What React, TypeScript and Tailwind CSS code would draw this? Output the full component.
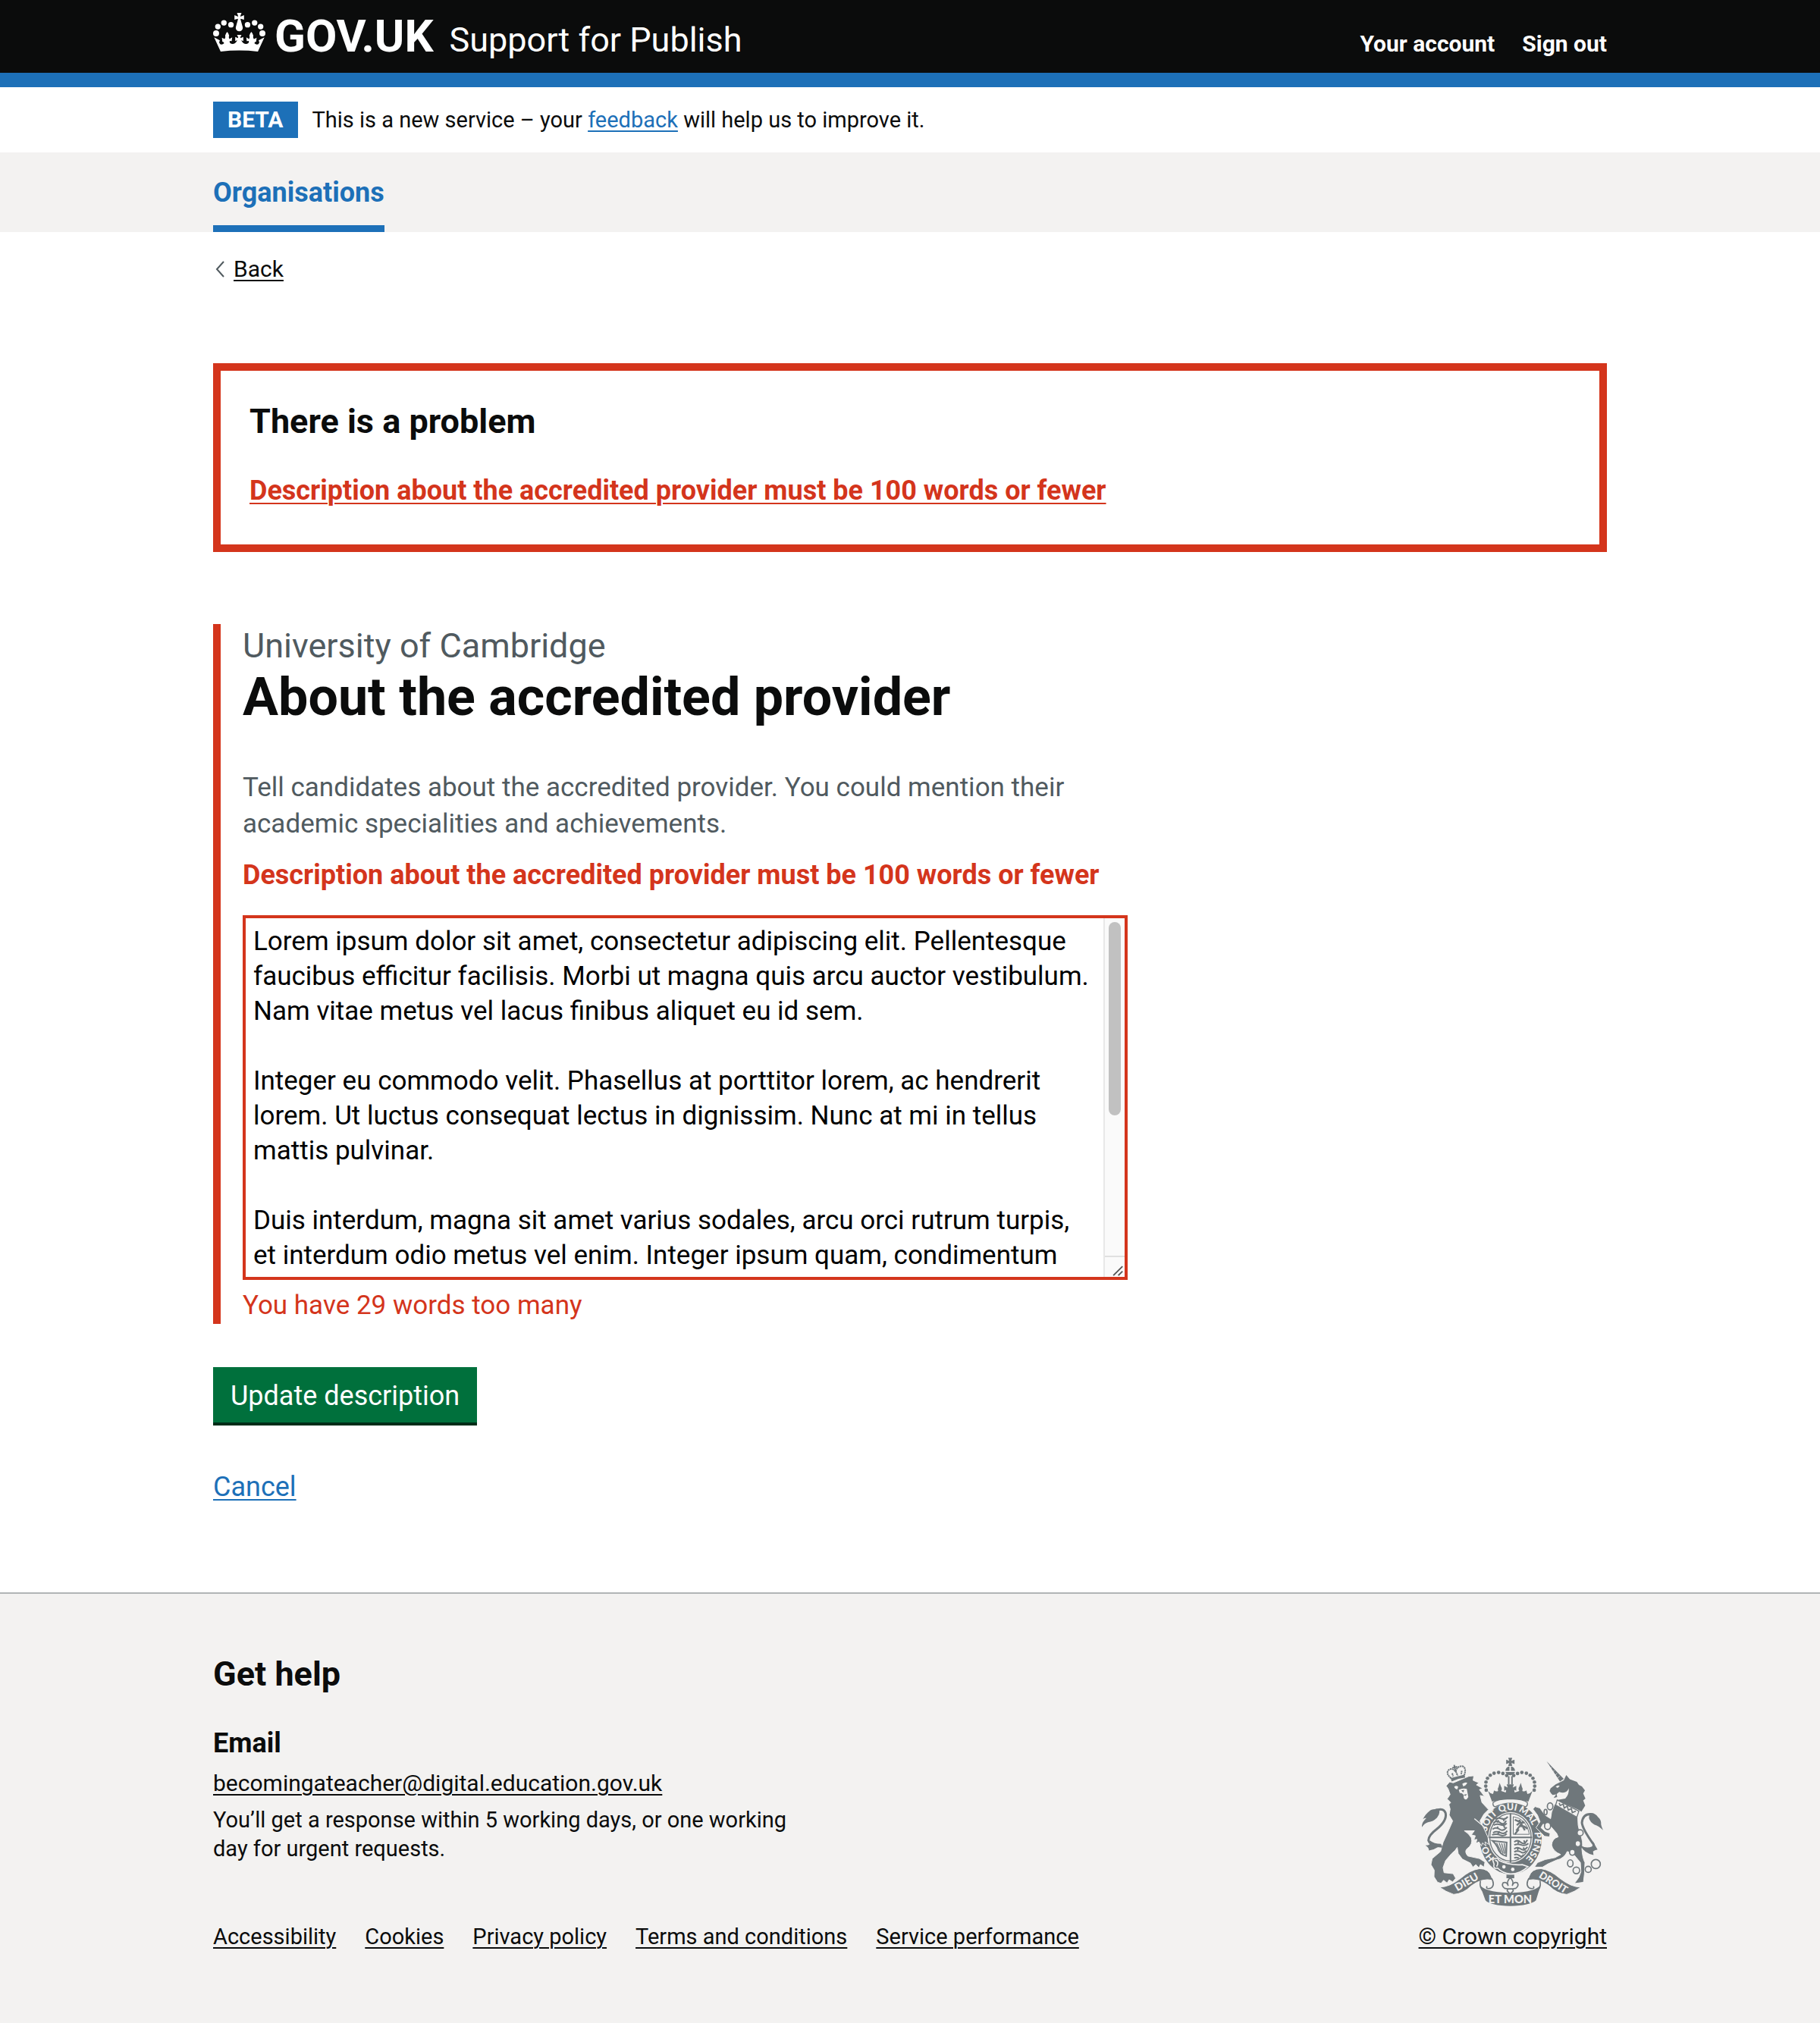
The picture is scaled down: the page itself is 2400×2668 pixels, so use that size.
import { useState, type ReactNode } from "react";

const ABOUT_TEXT = `Lorem ipsum dolor sit amet, consectetur adipiscing elit. Pellentesque faucibus efficitur facilisis. Morbi ut magna quis arcu auctor vestibulum. Nam vitae metus vel lacus finibus aliquet eu id sem.

Integer eu commodo velit. Phasellus at porttitor lorem, ac hendrerit lorem. Ut luctus consequat lectus in dignissim. Nunc at mi in tellus mattis pulvinar.

Duis interdum, magna sit amet varius sodales, arcu orci rutrum turpis, et interdum odio metus vel enim. Integer ipsum quam, condimentum vestibulum mauris vel, varius vehicula nunc. Sed tempor justo ut nibh gravida, vitae cursus arcu ornare. Vestibulum ante ipsum primis in faucibus orci luctus et ultrices posuere cubilia curae.

Praesent vitae nulla sed mi iaculis blandit. Aliquam erat volutpat. Donec eget sapien non risus rhoncus tincidunt at in est. Vivamus sed leo vitae.`;

const FOOTER_LINKS = [
  "Accessibility",
  "Cookies",
  "Privacy policy",
  "Terms and conditions",
  "Service performance",
];

function Container({ children, className = "" }: { children: ReactNode; className?: string }) {
  return <div className={`mx-auto w-full max-w-[1838px] ${className}`}>{children}</div>;
}

function Crown() {
  return (
    <svg viewBox="32 30 208 153" className="-mb-[5px] h-[51px] w-[69px] shrink-0" fill="currentColor" aria-hidden="true">
      <circle cx="75" cy="69" r="11" />
      <circle cx="51" cy="84" r="11" />
      <circle cx="44" cy="111" r="12" />
      <circle cx="103" cy="77" r="11" />
      <circle cx="197" cy="69" r="11" />
      <circle cx="221" cy="84" r="11" />
      <circle cx="228" cy="111" r="12" />
      <circle cx="169" cy="77" r="11" />
      <path d="M127 30H145L140 43Q141 44 142 44L155 39V57L142 53L141 55L148 80Q150 86 150 89A14 14 0 0 1 122 89Q122 86 124 80L131 55L130 53L117 57V39L130 44L132 43Z" />
      <path d="M36 127L62 183Q136 175 210 183L236 127L213 139L216 147L212 154Q204 158 196 150Q200 142 203 145L205 128Q197 132 194 134Q189 126 192 120Q189 110 184 105Q179 110 176 120Q180 126 175 134L164 127L166 142L174 141Q176 152 164 153Q150 153 144 138L152 142V125L141 130Q139 126 145 117H127Q133 126 131 130L120 125V142L128 138Q122 153 108 153Q96 152 98 141L106 142L108 127L97 134Q92 126 96 120Q93 110 88 105Q83 110 80 120Q83 126 78 134L67 128L69 145Q72 142 76 150Q68 158 60 154L56 147L59 139Z" />
    </svg>
  );
}

function RoyalArms() {
  const ink = "#6f777b";
  const paper = "#f3f2f1";
  const beads = [
    [327, 213],
    [325, 197],
    [326, 181],
    [332, 166],
    [343, 154],
    [358, 146],
    [376, 143],
    [393, 147],
    [408, 155],
  ];
  return (
    <svg viewBox="72 85 718 587" className="h-[196px] w-[239px]" fill={ink} fontFamily="Lato, sans-serif" fontWeight="900" role="img" aria-label="Royal coat of arms">
      <defs>
        <path id="garter" d="M423 508A96 108 0 0 1 423 292A96 108 0 0 1 423 508" />
      </defs>

      {/* Imperial crown */}
      <path d="M414 85H430L426 97L439 92V110L427 105L430 117H414L418 105L406 110V92L418 97Z" />
      <path d="M403 137A19 19 0 0 1 419 119V137ZM425 119A19 19 0 0 1 441 137H425ZM403 141H441Q438 151 422 154Q406 151 403 141Z" />
      {beads.map(([x, y]) => (
        <g key={`${x}-${y}`}>
          <circle cx={x} cy={y} r="7" />
          <circle cx={844 - x} cy={y} r="7" />
        </g>
      ))}
      <path d="M413 158H419V190H413ZM426 158H432V190H426Z" />
      <path d="M334 216L350 258Q422 238 494 258L510 216Q502 226 490 228L486 214Q478 220 470 216Q474 208 468 200L464 184L458 200Q452 208 458 216L440 222Q436 214 440 212L446 216V196L432 203L436 190H408L412 203L398 196V216L404 212Q408 214 404 222L386 216Q392 208 386 200L380 184L376 200Q370 208 374 216Q366 220 358 214L354 228Q342 226 334 216Z" />

      {/* Garter and shield */}
      <ellipse cx="424" cy="405" rx="123" ry="141" />
      <path d="M354 262Q370 248 422 247Q474 248 490 262Q492 276 482 279Q422 250 362 279Q352 276 354 262Z" fill={paper} stroke={ink} strokeWidth="4" />
      <ellipse cx="423" cy="400" rx="88" ry="100" fill={paper} />
      <g fill="none" stroke={ink}>
        <ellipse cx="423" cy="400" rx="82" ry="94" strokeWidth="4" />
        <path d="M423 305V500M337 400H509" strokeWidth="6" />
        <path d="M356 343Q368 330 382 342T406 334M356 352Q368 344 384 350T408 344M362 328Q374 320 388 326T412 318M352 368Q366 358 380 368T408 360M354 382Q368 374 384 382T410 374M350 390Q368 384 382 391T408 386M376 332L370 342M394 326L398 336M374 358L368 366M396 352L400 362M380 376L372 388" strokeWidth="6" />
        <path d="M438 418Q450 408 464 420T490 410M438 430Q452 424 466 430T494 424M438 446Q450 436 464 446T490 438M438 458Q452 450 464 458T486 452M438 470Q446 464 458 472T474 468M438 482Q444 478 456 482M458 412L452 424M476 412L482 426M456 440L450 450M474 440L480 452" strokeWidth="6" />
        <path d="M440 330L462 340L480 372M448 352Q462 336 478 342M446 374L462 352L474 336M462 356Q476 352 490 366M458 330L464 344M440 388L456 368" strokeWidth="7" />
        <path d="M434 318Q488 326 498 388H434Z" strokeWidth="3" />
        <path d="M352 414L408 420L406 474Q380 468 372 440Q366 426 352 414Z" strokeWidth="6" />
        <path d="M368 422L386 458M378 422L394 464M388 424L400 466M398 424L404 462" strokeWidth="4" />
      </g>
      <g fill={paper} fontSize="37" textAnchor="middle">
        <text>
          <textPath href="#garter" startOffset="98">HO</textPath>
        </text>
        <text>
          <textPath href="#garter" startOffset="224">SOIT</textPath>
        </text>
        <text>
          <textPath href="#garter" startOffset="310">QUI</textPath>
        </text>
        <text>
          <textPath href="#garter" startOffset="392">MAL</textPath>
        </text>
        <text>
          <textPath href="#garter" startOffset="518">PENSE</textPath>
        </text>
      </g>
      <path d="M352 488Q372 476 378 492Q420 512 470 508L492 516Q460 546 422 545Q392 542 372 522Q352 526 358 506Z" stroke={paper} strokeWidth="5" />
      <circle cx="397" cy="517" r="7" fill={paper} />
      <circle cx="432" cy="527" r="7" fill={paper} />
      <path d="M362 490Q380 496 368 516" fill="none" stroke={paper} strokeWidth="5" />

      {/* Lion */}
      <path
        d="M168 196L182 180L196 184L258 158L278 156L275 174L298 184L288 192L313 206L300 211L320 238L303 234L310 262L336 290L318 308L302 335L318 365L334 400L337 428L322 418L326 434L312 422L308 434L298 418L286 424L290 408L278 410L284 394L268 390L280 374L240 374Q258 384 268 402Q276 428 250 446Q240 458 254 474L300 484L322 498L318 518L304 508L298 521L286 508L274 518L264 502L232 486L216 464L212 440Q206 452 190 464L166 492L156 520L160 540L196 544L206 562L194 577L180 568L172 581L158 570L148 582L134 578L120 556L121 530L108 508L113 484L146 456L156 420L178 372L194 335L180 312L184 288L179 270L186 262L172 248L184 230L176 208Z"
        stroke={paper}
        strokeWidth="3"
      />
      <path d="M200 200Q208 192 216 200L212 210Q204 210 200 200ZM232 188Q244 180 252 184Q246 196 236 198ZM218 212Q232 204 250 208L256 240Q246 258 238 244Q240 224 222 224Z" fill={paper} />
      <path d="M228 214L240 212L236 222ZM236 232L250 228L246 236Z" />
      <path d="M280 326L326 364" stroke={paper} strokeWidth="4" />
      <path d="M186 165L240 152L244 163Q216 166 190 179Z" />
      <g fill="none" stroke={ink} strokeWidth="6">
        <path d="M188 166Q162 144 182 130Q196 126 206 140Q210 118 232 118Q250 124 240 154M206 138L214 156M192 146L196 158M230 136L228 150" strokeDasharray="7 2" />
        <path d="M200 113L204 133M192 125L212 120" />
      </g>
      <path d="M152 436Q106 436 98 412Q98 392 130 368Q172 334 166 304Q158 282 132 292" fill="none" stroke={ink} strokeWidth="9" />
      <path d="M140 288Q146 306 132 322Q116 338 96 340Q82 344 72 360Q70 342 90 324Q84 322 76 328Q88 306 102 296Q108 288 124 288Q130 284 140 288Z" />
      <path d="M104 412Q112 432 86 432Q100 440 100 452Q122 448 140 436L152 440L148 426Q120 426 104 412Z" />

      {/* Unicorn */}
      <path d="M566 98L634 168L619 179Z" />
      <path d="M576 112L570 116M586 122L580 130M597 134L590 142M608 146L600 154M618 157L609 166" stroke={paper} strokeWidth="2" />
      <path d="M578 216L582 206L602 190L634 174L644 153L658 170L686 180L694 192L706 198L718 214L711 226L720 246L711 254L719 274L704 298L690 290L606 252L640 246Q656 230 654 206Q644 230 616 220L606 228L608 240L594 244L604 230L590 232L584 226Z" />
      <path d="M602 200Q610 192 618 196L610 204Z" fill={paper} />
      <path
        d="M598 268L690 322Q688 350 698 382Q714 420 706 446Q708 480 718 500L716 545L712 578L676 583L694 558L702 536L700 500L672 466L648 456Q636 484 606 490L572 505L550 518L518 518L530 500L560 488L600 480L622 468Q590 455 586 430Q588 405 612 398L606 384L582 356L552 348L544 362L560 376L580 384L578 398L558 396L542 380L524 362L540 338L530 312L512 288L520 278L540 284L560 312L582 326L586 300Z"
        stroke={paper}
        strokeWidth="3"
      />
      <path d="M608 252L694 296L686 320L602 272Z" fill={paper} stroke={ink} strokeWidth="4" />
      <path d="M616 264L620 274L632 268L636 284L648 276L652 292L664 286L668 302L682 296" fill="none" stroke={ink} strokeWidth="5" />
      <g fill={paper} stroke={ink} strokeWidth="5">
        <ellipse cx="580" cy="277" rx="11" ry="14" />
        <ellipse cx="570" cy="355" rx="12" ry="14" />
        <ellipse cx="562" cy="300" rx="6" ry="11" />
        <circle cx="699" cy="382" r="12" />
        <ellipse cx="690" cy="425" rx="11" ry="12" />
        <ellipse cx="668" cy="459" rx="11" ry="12" />
        <ellipse cx="660" cy="503" rx="11" ry="14" />
        <circle cx="684" cy="531" r="13" />
        <circle cx="731" cy="527" r="12" />
        <circle cx="761" cy="506" r="18" />
      </g>
      <path d="M734 452Q758 450 752 428Q708 366 706 342Q710 306 742 308" fill="none" stroke={ink} strokeWidth="9" />
      <path d="M736 304Q756 300 770 320Q782 330 782 344Q780 348 790 372Q772 354 756 350Q738 340 734 324Z" />
      <path d="M700 432Q724 446 746 436Q752 428 750 416Q760 436 768 448Q756 450 750 456L752 470Q716 464 700 432Z" />

      {/* Motto scroll and fleur-de-lis */}
      <path d="M142 597Q180 598 226 562Q262 530 300 524Q338 524 348 556L352 570Q310 560 268 592Q236 624 198 626Q166 616 142 597Z" stroke={paper} strokeWidth="3" />
      <path d="M702 597Q664 598 618 562Q582 530 544 524Q506 524 496 556L492 570Q534 560 576 592Q608 624 646 626Q678 616 702 597Z" stroke={paper} strokeWidth="3" />
      <path d="M300 584Q312 616 422 620Q532 616 544 584L524 650Q500 671 422 672Q344 671 324 650Z" />
      <g fill="none" stroke={ink} strokeWidth="5">
        <path d="M348 562Q364 590 344 602Q324 606 330 594M304 572Q298 600 318 616" />
        <path d="M496 562Q480 590 500 602Q520 606 514 594M540 572Q546 600 526 616" />
      </g>
      <g fill={paper} textAnchor="middle">
        <text transform="translate(256 589) rotate(-30)" fontSize="42">
          DIEU
        </text>
        <text transform="translate(586 590) rotate(32)" fontSize="40">
          DROIT
        </text>
        <text x="422" y="662" fontSize="44">
          ET MON
        </text>
      </g>
      <path d="M407 548H438V562H407Z" />
      <path d="M422 560Q438 574 430 592Q436 574 450 580Q458 592 444 602L432 604L434 612L422 624L410 612L412 604L400 602Q386 592 394 580Q408 574 414 592Q406 574 422 560ZM410 604H434" fill={paper} stroke={ink} strokeWidth="5" />
    </svg>
  );
}

function ScrollRail() {
  return (
    <div className="pointer-events-none absolute inset-y-1 right-1 flex w-[28px] flex-col border-l-2 border-[#e8e8e8] bg-[#fafafa]" aria-hidden="true">
      <div className="flex-1 px-[5px] pt-[5px]">
        <div className="h-[255px] rounded-full bg-[#c1c1c1]" />
      </div>
      <svg viewBox="0 0 26 28" className="h-[28px] w-full border-t-2 border-[#e0e0e0]" fill="none" stroke="#555" strokeWidth="2">
        <path d="M11 26L24 13M18 26L24 20" />
      </svg>
    </div>
  );
}

const linkStyle = "underline decoration-2 underline-offset-4";

export default function App() {
  const [about, setAbout] = useState(ABOUT_TEXT);

  return (
    <div className="bg-white font-[Roboto,sans-serif] text-[35px] leading-[48px] text-[#0b0c0c]">
      <header className="border-b-[19px] border-[#1d70b8] bg-[#0b0c0c] text-white">
        <Container className="flex items-baseline justify-between pt-[17px] pb-[13px]">
          <div className="flex items-baseline">
            <a href="#home" className="flex items-baseline gap-[12px] text-[60px] leading-[60px] font-bold">
              <Crown />
              GOV.UK
            </a>
            <a href="#service" className="ml-[21px] text-[45px] leading-[60px]">
              Support for Publish
            </a>
          </div>
          <nav aria-label="Account" className="flex gap-[36px] text-[30px] leading-[38px] font-bold">
            <a href="#account">Your account</a>
            <a href="#sign-out">Sign out</a>
          </nav>
        </Container>
      </header>

      <Container className="flex items-center gap-[19px] py-[19px]">
        <strong className="bg-[#1d70b8] px-[19px] text-[30px] leading-[48px] font-bold text-white">BETA</strong>
        <p className="text-[29px] leading-[38px]">
          This is a new service – your{" "}
          <a href="#feedback" className={`${linkStyle} text-[#1d70b8]`}>
            feedback
          </a>{" "}
          will help us to improve it.
        </p>
      </Container>

      <nav aria-label="Primary" className="bg-[#f3f2f1]">
        <Container className="flex">
          <a href="#organisations" aria-current="page" className="border-b-[9px] border-[#1d70b8] pt-[29px] pb-[19px] text-[36px] font-bold text-[#1d70b8]">
            Organisations
          </a>
        </Container>
      </nav>

      <Container className="pt-[30px] pb-[115px]">
        <a href="#back" className="flex w-fit items-center gap-[12px] pl-[3px] text-[30px] leading-[38px]">
          <svg viewBox="0 0 12 22" className="h-[22px] w-[12px]" fill="none" stroke="#505a5f" strokeWidth="2" aria-hidden="true">
            <path d="M11 1L2 11L11 21" />
          </svg>
          <span className={linkStyle}>Back</span>
        </a>

        <main className="pt-[105px]">
          <section role="alert" aria-labelledby="problem-title" className="border-[10px] border-[#d4351c] px-[38px] pt-[38px] pb-[47px]">
            <h2 id="problem-title" className="text-[45px] leading-[58px] font-bold">
              There is a problem
            </h2>
            <a href="#about" className={`${linkStyle} mt-[38px] block w-fit text-[36px] font-bold text-[#d4351c]`}>
              Description about the accredited provider must be 100 words or fewer
            </a>
          </section>

          <form className="mt-[95px] max-w-[1206px]" onSubmit={(e) => e.preventDefault()}>
            <div className="border-l-[10px] border-[#d4351c] pl-[29px]">
              <h1>
                <span className="block text-[45px] leading-[58px] text-[#505a5f]">University of Cambridge</span>
                <label htmlFor="about" className="block text-[70px] leading-[76px] font-bold">
                  About the accredited provider
                </label>
              </h1>
              <p id="about-hint" className="mt-[58px] text-[#505a5f]">
                Tell candidates about the accredited provider. You could mention their academic specialities and achievements.
              </p>
              <p id="about-error" className="mt-[19px] text-[36px] font-bold text-[#d4351c]">
                Description about the accredited provider must be 100 words or fewer
              </p>
              <div className="relative mt-[29px]">
                <textarea
                  id="about"
                  aria-describedby="about-hint about-error about-count"
                  value={about}
                  onChange={(e) => setAbout(e.target.value)}
                  className="block h-[481px] w-full resize-y border-4 border-[#d4351c] bg-white py-2 pr-[38px] pl-[10px] leading-[46px] text-black outline-none [scrollbar-width:none]"
                />
                <ScrollRail />
              </div>
              <p id="about-count" className="mt-[10px] text-[#d4351c]">
                You have 29 words too many
              </p>
            </div>

            <button type="submit" className="mt-[57px] block border-b-4 border-[#002d18] bg-[#00703c] px-[23px] pt-[14px] pb-[11px] text-[36px] text-white">
              Update description
            </button>
            <a href="#cancel" className={`${linkStyle} mt-[57px] block w-fit text-[36px] text-[#1d70b8]`}>
              Cancel
            </a>
          </form>
        </main>
      </Container>

      <footer className="border-t-2 border-[#b1b4b6] bg-[#f3f2f1] text-[30px] leading-[38px]">
        <Container className="flex items-end justify-between pt-[77px] pb-[95px]">
          <div>
            <h2 className="text-[45px] leading-[58px] font-bold">Get help</h2>
            <h3 className="mt-[38px] text-[36px] leading-[48px] font-bold">Email</h3>
            <a href="mailto:becomingateacher@digital.education.gov.uk" className={`${linkStyle} mt-[10px] block w-fit`}>
              becomingateacher@digital.education.gov.uk
            </a>
            <p className="mt-[10px] max-w-[780px] text-[29px]">You’ll get a response within 5 working days, or one working day for urgent requests.</p>
            <ul className="mt-[78px] flex flex-wrap gap-x-[38px] text-[29px]">
              {FOOTER_LINKS.map((link) => (
                <li key={link}>
                  <a href="#footer" className={linkStyle}>
                    {link}
                  </a>
                </li>
              ))}
            </ul>
          </div>
          <a href="#copyright" className={`${linkStyle} flex flex-col items-center gap-[21px]`}>
            <RoyalArms />
            © Crown copyright
          </a>
        </Container>
      </footer>
    </div>
  );
}
